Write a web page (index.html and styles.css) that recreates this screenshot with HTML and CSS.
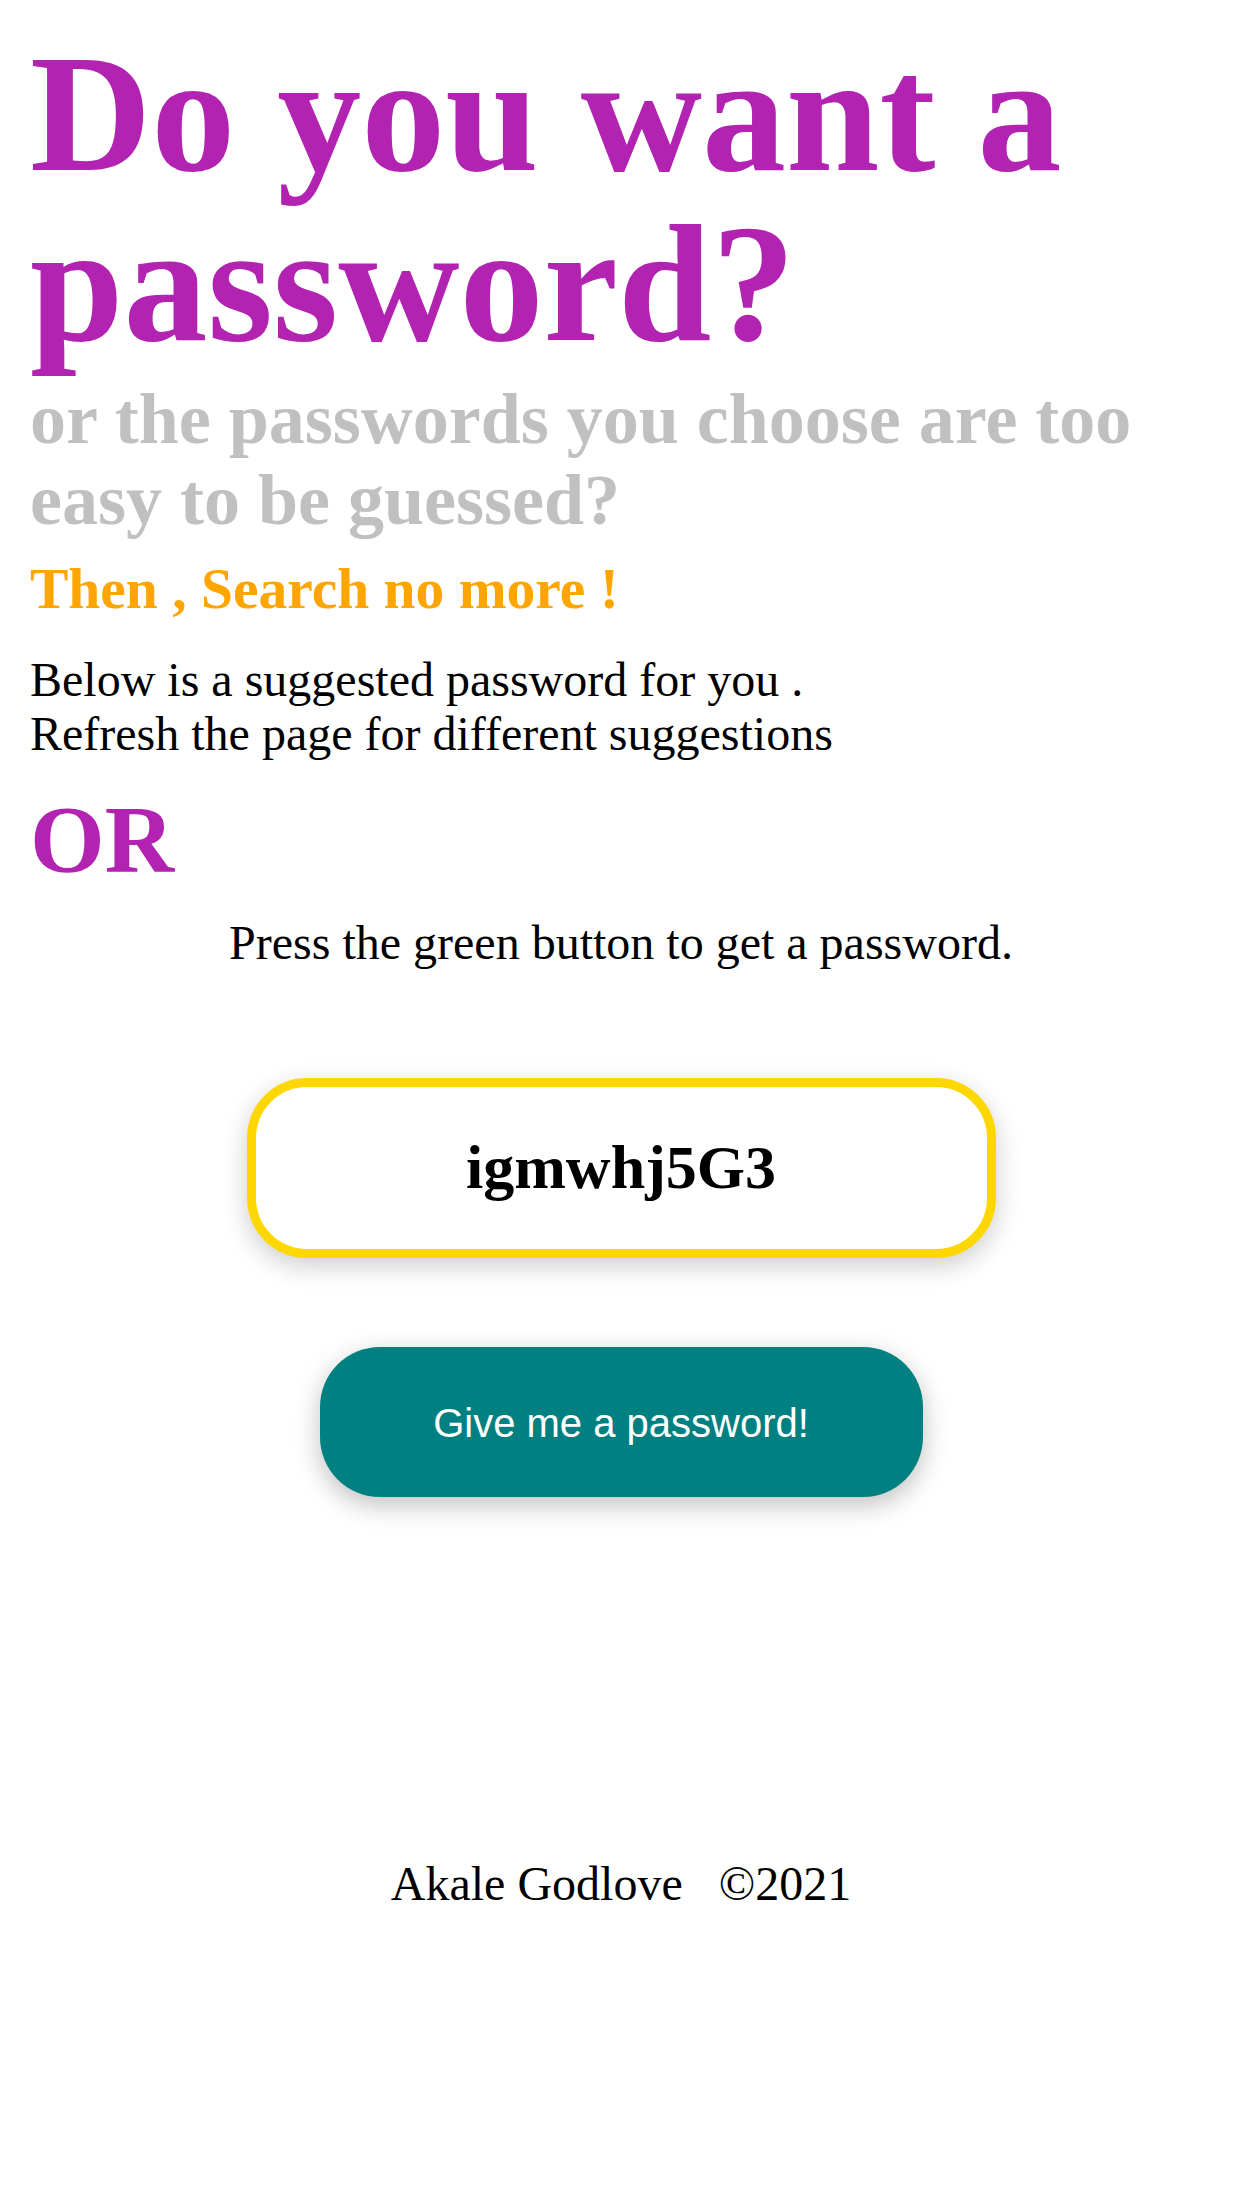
FILE: index.html
```html
<!DOCTYPE html>
<html lang="en">
<head>
<meta charset="utf-8">
<title>Password Generator</title>
<link rel="stylesheet" href="styles.css">
</head>
<body>
<main class="page">
  <h1 class="title">Do you want a password?</h1>
  <h2 class="subtitle">or the passwords you choose are too easy to be guessed?</h2>
  <h3 class="tagline">Then , Search no more !</h3>
  <p class="intro">Below is a suggested password for you .<br>Refresh the page for different suggestions</p>
  <h2 class="or">OR</h2>
  <p class="hint">Press the green button to get a password.</p>
  <div class="password-box">igmwhj5G3</div>
  <div class="action">
    <button class="generate" type="button">Give me a password!</button>
  </div>
</main>
<footer class="footer">Akale Godlove&nbsp;&nbsp;&nbsp;©2021</footer>
</body>
</html>
```

FILE: styles.css
```css
html, body {
  margin: 0;
  padding: 0;
  background: #ffffff;
}

body {
  font-family: "Liberation Serif", "Times New Roman", serif;
  color: #000000;
  padding: 0 30px;
}

.page {
  display: flex;
  flex-direction: column;
}

.title {
  margin: 28px 0 0;
  font-size: 168px;
  line-height: 170px;
  font-weight: bold;
  color: #b123b0;
}

.subtitle {
  margin: 11px 0 0;
  font-size: 72px;
  line-height: 81px;
  font-weight: bold;
  color: #c0c0c0;
}

.tagline {
  margin: 15px 0 0;
  font-size: 57.5px;
  line-height: 66px;
  font-weight: bold;
  color: #ffa500;
}

.intro {
  margin: 31px 0 0;
  font-size: 48px;
  line-height: 54px;
}

.or {
  margin: 24px 0 0;
  font-size: 96px;
  line-height: 110px;
  font-weight: bold;
  color: #b123b0;
}

.hint {
  margin: 21px 0 0;
  font-size: 48px;
  line-height: 54px;
  text-align: center;
}

.password-box {
  align-self: center;
  box-sizing: border-box;
  width: 749px;
  height: 180px;
  margin-top: 108px;
  border: 9px solid #ffd700;
  border-radius: 60px;
  background: #ffffff;
  box-shadow: 0 8px 26px rgba(0, 0, 0, 0.2);
  display: flex;
  align-items: center;
  justify-content: center;
  font-size: 62px;
  font-weight: bold;
  padding-bottom: 2px;
}

.action {
  display: flex;
  justify-content: center;
  margin-top: 89px;
}

.generate {
  width: 603px;
  height: 150px;
  border: none;
  border-radius: 60px;
  background: #008080;
  color: #ffffff;
  font-family: "Liberation Sans", Arial, sans-serif;
  font-size: 40px;
  padding-top: 4px;
  box-shadow: 0 8px 26px rgba(0, 0, 0, 0.25);
  cursor: pointer;
}

.footer {
  margin-top: 360px;
  font-size: 48px;
  line-height: 54px;
  text-align: center;
}
```
